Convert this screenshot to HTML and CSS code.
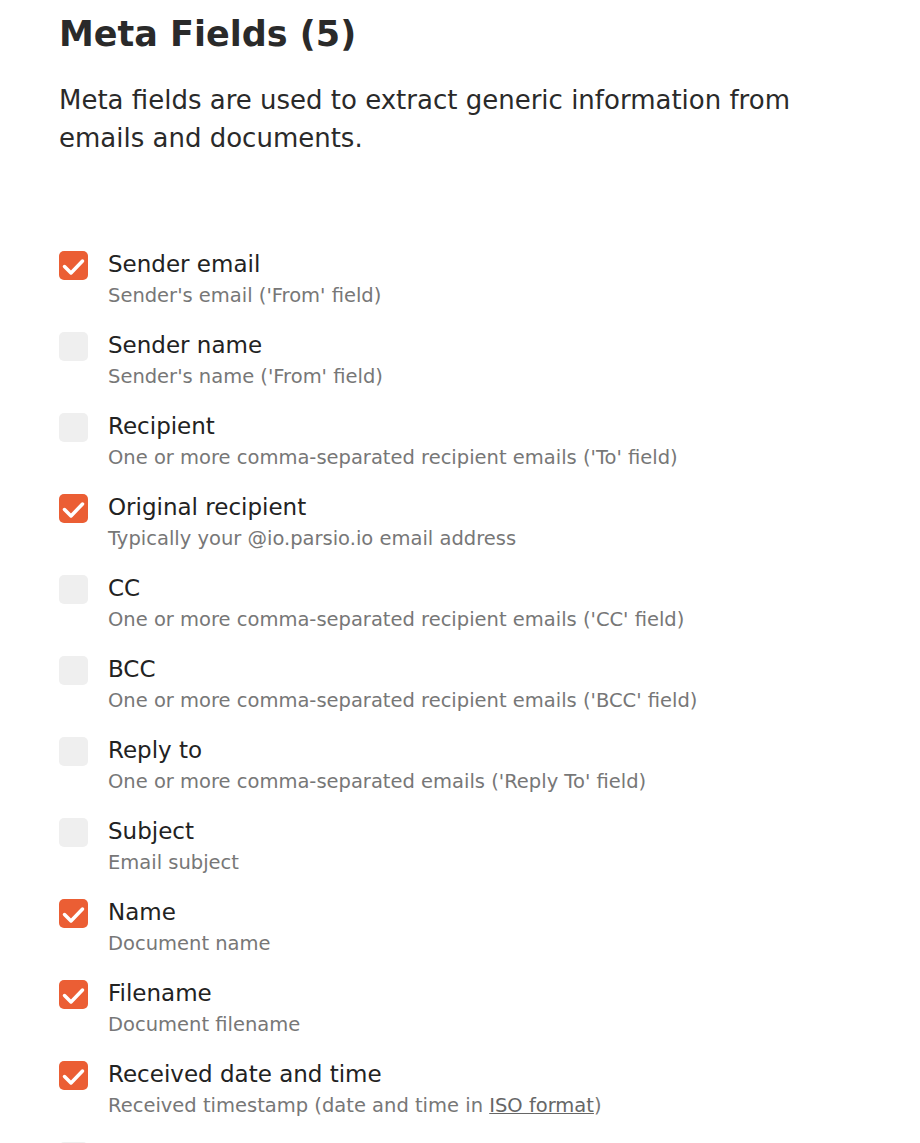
FILE: index.html
```html
<!DOCTYPE html>
<html>
<head>
<meta charset="utf-8">
<title>Meta Fields</title>
<link rel="stylesheet" href="styles.css">
</head>
<body>

<div class="meta-wrapper">
<h1 class="meta-title">Meta Fields (5)</h1>
<p class="meta-intro">Meta fields are used to extract generic information from emails and documents.</p>

<ul class="fields">

<li class="field">
<span class="check checked"><svg viewBox="0 0 29 29" width="29" height="29"><path d="M5.5 15.5l6.5 6.5L23.5 10" fill="none" stroke="#fff" stroke-width="3.5" stroke-linecap="round" stroke-linejoin="round"/></svg></span>
<div class="field-text">
<div class="field-name">Sender email</div>
<div class="field-desc">Sender's email ('From' field)</div>
</div>
</li>

<li class="field">
<span class="check"></span>
<div class="field-text">
<div class="field-name">Sender name</div>
<div class="field-desc">Sender's name ('From' field)</div>
</div>
</li>

<li class="field">
<span class="check"></span>
<div class="field-text">
<div class="field-name">Recipient</div>
<div class="field-desc">One or more comma-separated recipient emails ('To' field)</div>
</div>
</li>

<li class="field">
<span class="check checked"><svg viewBox="0 0 29 29" width="29" height="29"><path d="M5.5 15.5l6.5 6.5L23.5 10" fill="none" stroke="#fff" stroke-width="3.5" stroke-linecap="round" stroke-linejoin="round"/></svg></span>
<div class="field-text">
<div class="field-name">Original recipient</div>
<div class="field-desc">Typically your @io.parsio.io email address</div>
</div>
</li>

<li class="field">
<span class="check"></span>
<div class="field-text">
<div class="field-name">CC</div>
<div class="field-desc">One or more comma-separated recipient emails ('CC' field)</div>
</div>
</li>

<li class="field">
<span class="check"></span>
<div class="field-text">
<div class="field-name">BCC</div>
<div class="field-desc">One or more comma-separated recipient emails ('BCC' field)</div>
</div>
</li>

<li class="field">
<span class="check"></span>
<div class="field-text">
<div class="field-name">Reply to</div>
<div class="field-desc">One or more comma-separated emails ('Reply To' field)</div>
</div>
</li>

<li class="field">
<span class="check"></span>
<div class="field-text">
<div class="field-name">Subject</div>
<div class="field-desc">Email subject</div>
</div>
</li>

<li class="field">
<span class="check checked"><svg viewBox="0 0 29 29" width="29" height="29"><path d="M5.5 15.5l6.5 6.5L23.5 10" fill="none" stroke="#fff" stroke-width="3.5" stroke-linecap="round" stroke-linejoin="round"/></svg></span>
<div class="field-text">
<div class="field-name">Name</div>
<div class="field-desc">Document name</div>
</div>
</li>

<li class="field">
<span class="check checked"><svg viewBox="0 0 29 29" width="29" height="29"><path d="M5.5 15.5l6.5 6.5L23.5 10" fill="none" stroke="#fff" stroke-width="3.5" stroke-linecap="round" stroke-linejoin="round"/></svg></span>
<div class="field-text">
<div class="field-name">Filename</div>
<div class="field-desc">Document filename</div>
</div>
</li>

<li class="field">
<span class="check checked"><svg viewBox="0 0 29 29" width="29" height="29"><path d="M5.5 15.5l6.5 6.5L23.5 10" fill="none" stroke="#fff" stroke-width="3.5" stroke-linecap="round" stroke-linejoin="round"/></svg></span>
<div class="field-text">
<div class="field-name">Received date and time</div>
<div class="field-desc">Received timestamp (date and time in <a href="#">ISO format</a>)</div>
</div>
</li>

<li class="field">
<span class="check"></span>
</li>

</ul>
</div>

</body>
</html>
```

FILE: styles.css
```css
body {
  margin: 0;
  background: #fff;
  font-family: "DejaVu Sans", "Open Sans", sans-serif;
  color: #222;
}

.meta-wrapper {
  padding: 0 40px 0 59px;
}

.meta-title {
  margin: 0;
  padding-top: 9px;
  font-size: 35px;
  line-height: 50px;
  font-weight: 700;
  color: #2a2a2a;
}

.meta-intro {
  margin: 22px 0 0 0;
  font-size: 26px;
  line-height: 38px;
  color: #2a2a2a;
  max-width: 780px;
}

.fields {
  list-style: none;
  margin: 0;
  padding: 0;
  padding-top: 94px;
}

.field {
  display: flex;
  gap: 20px;
  height: 81px;
}

.check {
  flex: none;
  width: 29px;
  height: 29px;
  border-radius: 5px;
  background-color: #efefef;
}

.check svg {
  display: block;
}

.check.checked {
  background-color: #eb5e34;
}

.field-text {
  margin-top: -3px;
}

.field-name {
  font-size: 23px;
  line-height: 32px;
  color: #222;
}

.field-desc {
  font-size: 19.5px;
  line-height: 32px;
  color: #777;
}

.field-desc a {
  color: #666;
  text-decoration: underline;
}
```
